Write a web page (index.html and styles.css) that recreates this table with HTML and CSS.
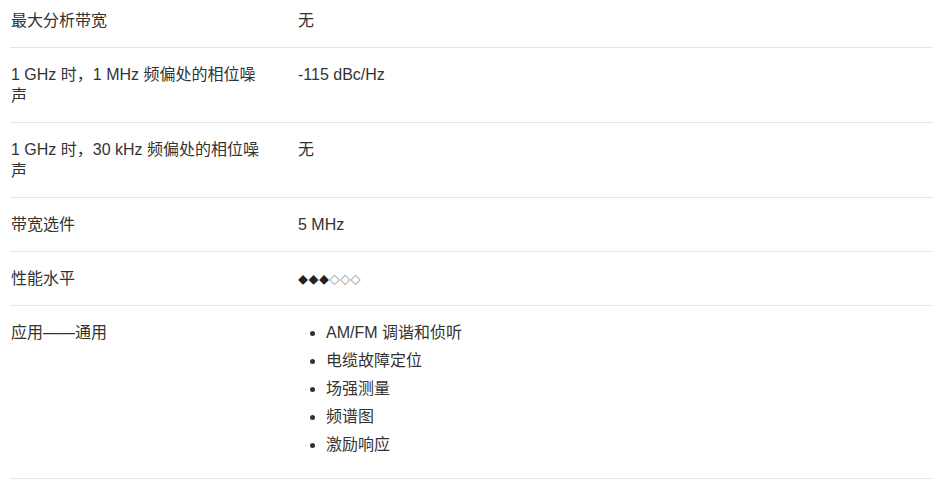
FILE: index.html
```html
<!DOCTYPE html>
<html lang="zh-CN">
<head>
    <meta charset="UTF-8">
    <meta name="viewport" content="width=device-width, initial-scale=1.0">
    <title>规格</title>
    <link rel="stylesheet" href="styles.css">
</head>
<body>
    <div class="container">
        <table class="specs">
            <tr class="first">
                <td class="label">最大分析带宽</td>
                <td class="value">无</td>
            </tr>
            <tr>
                <td class="label">1 GHz 时，1 MHz 频偏处的相位噪声</td>
                <td class="value">-115 dBc/Hz</td>
            </tr>
            <tr>
                <td class="label">1 GHz 时，30 kHz 频偏处的相位噪声</td>
                <td class="value">无</td>
            </tr>
            <tr>
                <td class="label">带宽选件</td>
                <td class="value">5 MHz</td>
            </tr>
            <tr>
                <td class="label">性能水平</td>
                <td class="value"><span class="rating">◆◆◆◇◇◇</span></td>
            </tr>
            <tr>
                <td class="label">应用——通用</td>
                <td class="value">
                    <ul class="apps">
                        <li>AM/FM 调谐和侦听</li>
                        <li>电缆故障定位</li>
                        <li>场强测量</li>
                        <li>频谱图</li>
                        <li>激励响应</li>
                    </ul>
                </td>
            </tr>
        </table>
    </div>
</body>
</html>
```

FILE: styles.css
```css
body {
    font-family: "Liberation Sans", Arial, "Noto Sans CJK SC", sans-serif;
    font-size: 16px;
    line-height: 21px;
    margin: 0;
    padding: 0;
    background-color: #fff;
    color: #333;
}
.container {
    padding-left: 10px;
}
.specs {
    width: 100%;
    border-collapse: collapse;
}
.specs tr {
    border-bottom: 1px solid #e5e5e5;
}
.specs td {
    padding: 16px 0 16px 1px;
    vertical-align: top;
}
.specs .first td {
    padding-top: 10px;
}
.specs td.label {
    width: 287px;
    padding-right: 32px;
    box-sizing: border-box;
}
.rating {
    font-size: 10px;
    line-height: 1;
    letter-spacing: 0.5px;
    color: #222;
}
.apps {
    margin: 0;
    padding-left: 28px;
}
.apps li {
    margin-bottom: 7px;
}
```
